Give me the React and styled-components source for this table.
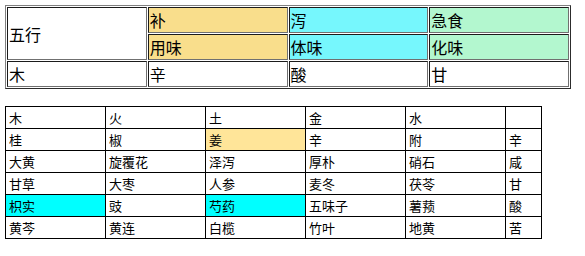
import React from 'react'
import styled, { createGlobalStyle } from 'styled-components'

const GlobalStyle = createGlobalStyle`
  body {
    margin: 0;
    background: #fff;
    font-family: "Noto Sans CJK SC", "Liberation Sans", sans-serif;
    color: #000;
  }
`

const TONES = {
  yellow: '#f9de8c',
  cyan: '#76f7fd',
  green: '#b3f7cf',
  paleYellow: '#ffe599',
  aqua: '#00ffff',
}

const Page = styled.div`
  display: flex;
  flex-direction: column;
  align-items: flex-start;
  gap: 17px;
  padding: 5px 0 0 5px;
`

const SummaryTable = styled.table`
  width: 566px;
  border: 1px outset #808080;
  border-collapse: separate;
  border-spacing: 1px;
  table-layout: fixed;
  font-size: 16px;
`

const SummaryCell = styled.td`
  height: 24px;
  padding: 0 1px;
  border: 1px inset #707070;
  line-height: 22px;
  vertical-align: middle;
  white-space: nowrap;
  background: ${(p) => (p.$tone ? TONES[p.$tone] : '#fff')};
`

const HerbTable = styled.table`
  border-collapse: collapse;
  table-layout: fixed;
  font-size: 13px;
`

const HerbCell = styled.td`
  width: ${(p) => (p.$narrow ? '29px' : '93px')};
  height: 21px;
  padding: 0 3px;
  border: 1px solid #000;
  line-height: 21px;
  white-space: nowrap;
  background: ${(p) => (p.$tone ? TONES[p.$tone] : '#fff')};
`

const herbRows = [
  [['木'], ['火'], ['土'], ['金'], ['水'], ['']],
  [['桂'], ['椒'], ['姜', 'paleYellow'], ['辛'], ['附'], ['辛']],
  [['大黄'], ['旋覆花'], ['泽泻'], ['厚朴'], ['硝石'], ['咸']],
  [['甘草'], ['大枣'], ['人参'], ['麦冬'], ['茯苓'], ['甘']],
  [['枳实', 'aqua'], ['豉'], ['芍药', 'aqua'], ['五味子'], ['薯蓣'], ['酸']],
  [['黄芩'], ['黄连'], ['白榄'], ['竹叶'], ['地黄'], ['苦']],
]

export default function App() {
  return (
    <>
      <GlobalStyle />
      <Page>
        <SummaryTable>
          <tbody>
            <tr>
              <SummaryCell rowSpan={2}>五行</SummaryCell>
              <SummaryCell $tone="yellow">补</SummaryCell>
              <SummaryCell $tone="cyan">泻</SummaryCell>
              <SummaryCell $tone="green">急食</SummaryCell>
            </tr>
            <tr>
              <SummaryCell $tone="yellow">用味</SummaryCell>
              <SummaryCell $tone="cyan">体味</SummaryCell>
              <SummaryCell $tone="green">化味</SummaryCell>
            </tr>
            <tr>
              <SummaryCell>木</SummaryCell>
              <SummaryCell>辛</SummaryCell>
              <SummaryCell>酸</SummaryCell>
              <SummaryCell>甘</SummaryCell>
            </tr>
          </tbody>
        </SummaryTable>

        <HerbTable>
          <tbody>
            {herbRows.map((row, i) => (
              <tr key={i}>
                {row.map(([text, tone], j) => (
                  <HerbCell key={j} $tone={tone} $narrow={j === row.length - 1}>
                    {text}
                  </HerbCell>
                ))}
              </tr>
            ))}
          </tbody>
        </HerbTable>
      </Page>
    </>
  )
}
